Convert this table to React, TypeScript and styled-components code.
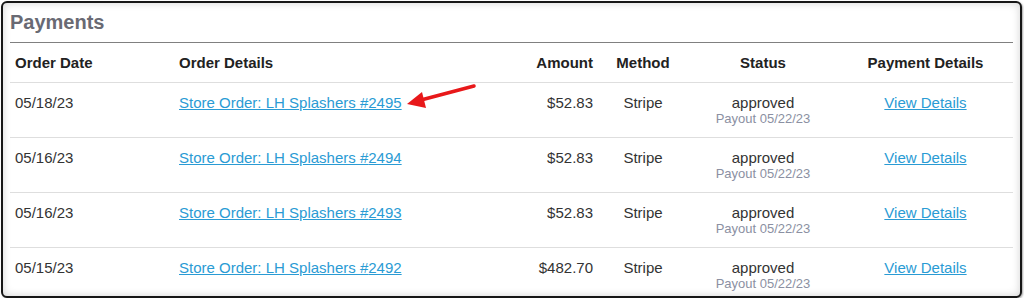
import React from "react";
import styled, {createGlobalStyle} from "styled-components";

const Global = createGlobalStyle`
    body {
        margin: 0;
        background: #fff;
        font-family: "Liberation Sans", Arial, sans-serif;
    }
`

const Frame = styled.div`
    position: relative;
    box-sizing: border-box;
    margin: 1px 2px 0 1px;
    height: 297px;
    border: 2px solid #161616;
    border-radius: 6px;
    box-shadow: inset 0 0 9px rgba(0, 0, 0, 0.18), 1px 1px 2px rgba(0, 0, 0, 0.35);
    padding: 7px 7px 0 7px;
    overflow: hidden;
    background: #fff;
`

const Title = styled.h2`
    margin: 0;
    font-size: 20px;
    line-height: 24px;
    font-weight: bold;
    color: #696a73;
    padding-bottom: 8px;
    border-bottom: 1px solid #808080;
`

const Table = styled.table`
    width: 100%;
    border-collapse: collapse;
    table-layout: fixed;
    font-size: 15px;
    color: #333;
`

const Head = styled.th<{align?: string}>`
    height: 39px;
    padding: 0 5px;
    font-weight: bold;
    color: #222;
    text-align: ${p => p.align || "left"};
    vertical-align: middle;
`

const Cell = styled.td<{align?: string}>`
    height: 55px;
    box-sizing: border-box;
    padding: 11px 5px 0;
    border-top: 1px solid #dedede;
    text-align: ${p => p.align || "left"};
    vertical-align: top;
    line-height: 17px;
`

const Link = styled.a`
    color: #2a9bd4;
    text-decoration: underline;
    cursor: pointer;
`

const Payout = styled.div`
    font-size: 13px;
    line-height: 15px;
    color: #8b90a2;
`

const Arrow = styled.svg`
    position: absolute;
    left: 400px;
    top: 78px;
`

const rows = [
    {date: "05/18/23", order: "2495", amount: "$52.83"},
    {date: "05/16/23", order: "2494", amount: "$52.83"},
    {date: "05/16/23", order: "2493", amount: "$52.83"},
    {date: "05/15/23", order: "2492", amount: "$482.70"},
]

export default function App() {
    return <>
        <Global/>
        <Frame>
            <Title>Payments</Title>
            <Table>
                <colgroup>
                    <col style={{width: 164}}/>
                    <col style={{width: 346}}/>
                    <col style={{width: 78}}/>
                    <col style={{width: 90}}/>
                    <col style={{width: 150}}/>
                    <col style={{width: 175}}/>
                </colgroup>
                <thead>
                    <tr>
                        <Head>Order Date</Head>
                        <Head>Order Details</Head>
                        <Head align="right">Amount</Head>
                        <Head align="center">Method</Head>
                        <Head align="center">Status</Head>
                        <Head align="center">Payment Details</Head>
                    </tr>
                </thead>
                <tbody>
                    {rows.map(r => <tr key={r.order}>
                        <Cell>{r.date}</Cell>
                        <Cell><Link>Store Order: LH Splashers #{r.order}</Link></Cell>
                        <Cell align="right">{r.amount}</Cell>
                        <Cell align="center">Stripe</Cell>
                        <Cell align="center">
                            approved
                            <Payout>Payout 05/22/23</Payout>
                        </Cell>
                        <Cell align="center"><Link>View Details</Link></Cell>
                    </tr>)}
                </tbody>
            </Table>
            <Arrow width="80" height="30" viewBox="0 0 80 30">
                <line x1="71" y1="5" x2="18" y2="19" stroke="#e8181a" strokeWidth="3.5" strokeLinecap="round"/>
                <polygon points="4,23 19,11 23,27" fill="#e8181a"/>
            </Arrow>
        </Frame>
    </>
}
